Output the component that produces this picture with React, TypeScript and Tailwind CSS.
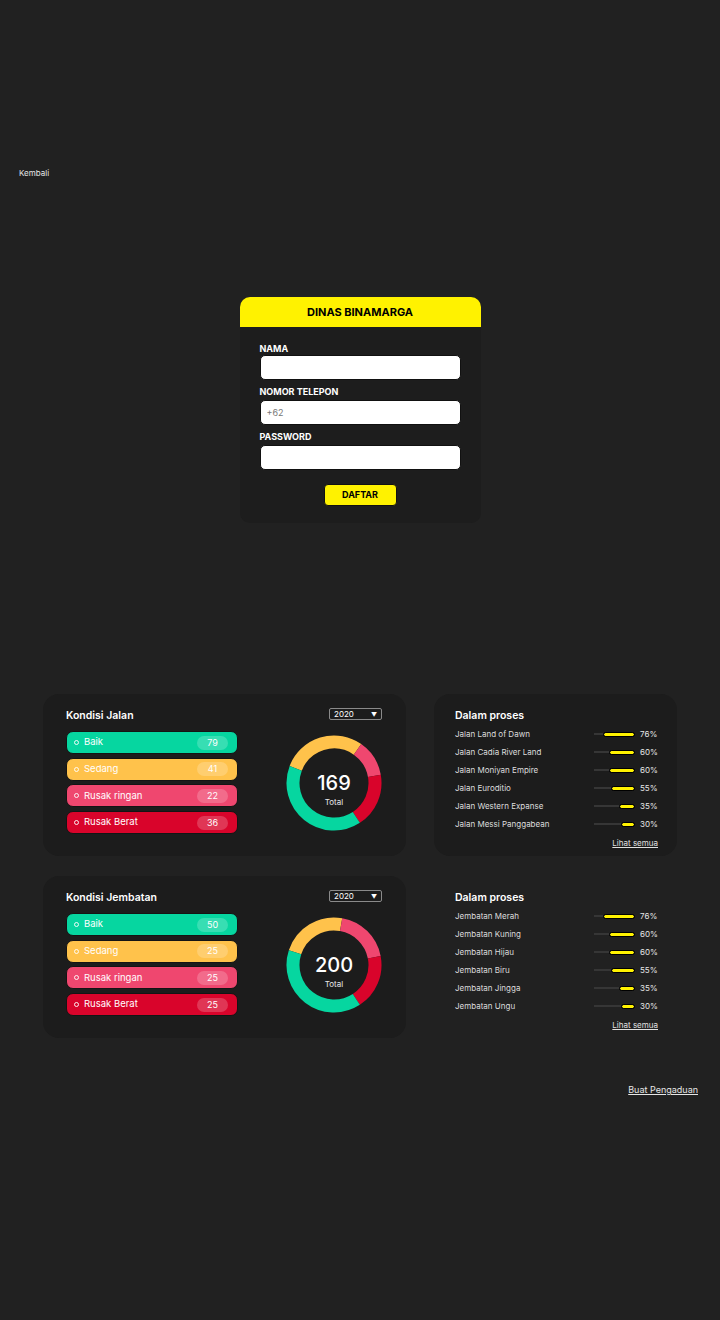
import React from "react";

interface Kondisi {
  label: string;
  value: number;
  color: string;
}

interface Segment {
  from: number;
  to: number;
  color: string;
}

interface Proses {
  name: string;
  pct: number;
}

const jalan: Kondisi[] = [
  { label: "Baik", value: 79, color: "bg-[#06d6a0]" },
  { label: "Sedang", value: 41, color: "bg-[#ffc24b]" },
  { label: "Rusak ringan", value: 22, color: "bg-[#ef476f]" },
  { label: "Rusak Berat", value: 36, color: "bg-[#d9042b]" },
];

const jembatan: Kondisi[] = [
  { label: "Baik", value: 50, color: "bg-[#06d6a0]" },
  { label: "Sedang", value: 25, color: "bg-[#ffc24b]" },
  { label: "Rusak ringan", value: 25, color: "bg-[#ef476f]" },
  { label: "Rusak Berat", value: 25, color: "bg-[#d9042b]" },
];

// angles in degrees, clockwise from 12 o'clock
const jalanDonut: Segment[] = [
  { from: 291, to: 395, color: "#ffc24b" },
  { from: 35, to: 80, color: "#ef476f" },
  { from: 80, to: 147, color: "#d9042b" },
  { from: 147, to: 291, color: "#06d6a0" },
];

const jembatanDonut: Segment[] = [
  { from: 288, to: 370, color: "#ffc24b" },
  { from: 10, to: 79, color: "#ef476f" },
  { from: 79, to: 147, color: "#d9042b" },
  { from: 147, to: 288, color: "#06d6a0" },
];

const prosesJalan: Proses[] = [
  { name: "Jalan Land of Dawn", pct: 76 },
  { name: "Jalan Cadia River Land", pct: 60 },
  { name: "Jalan Moniyan Empire", pct: 60 },
  { name: "Jalan Euroditio", pct: 55 },
  { name: "Jalan Western Expanse", pct: 35 },
  { name: "Jalan Messi Panggabean", pct: 30 },
];

const prosesJembatan: Proses[] = [
  { name: "Jembatan Merah", pct: 76 },
  { name: "Jembatan Kuning", pct: 60 },
  { name: "Jembatan Hijau", pct: 60 },
  { name: "Jembatan Biru", pct: 55 },
  { name: "Jembatan Jingga", pct: 35 },
  { name: "Jembatan Ungu", pct: 30 },
];

function point(a: number, r: number) {
  const rad = (a * Math.PI) / 180;
  return [48 + r * Math.sin(rad), 48 - r * Math.cos(rad)];
}

function arc(s: Segment) {
  const r = 41;
  const [x1, y1] = point(s.from, r);
  const [x2, y2] = point(s.to, r);
  const large = s.to - s.from > 180 ? 1 : 0;
  return `M ${x1} ${y1} A ${r} ${r} 0 ${large} 1 ${x2} ${y2}`;
}

function Donut({ segments, total }: { segments: Segment[]; total: number }) {
  return (
    <div className="relative h-[96px] w-[96px]">
      <svg width="96" height="96" viewBox="0 0 96 96">
        {segments.map((s) => (
          <path key={s.from} d={arc(s)} fill="none" stroke={s.color} strokeWidth={13} />
        ))}
      </svg>
      <div className="absolute inset-0 flex flex-col items-center pt-[37px]">
        <span className="text-[20px] font-medium leading-[22px] text-white">{total}</span>
        <span className="mt-[3px] text-[8px] leading-[10px] text-[#e8e8e8]">Total</span>
      </div>
    </div>
  );
}

function KondisiCard({
  title,
  items,
  segments,
  total,
}: {
  title: string;
  items: Kondisi[];
  segments: Segment[];
  total: number;
}) {
  return (
    <div className="flex h-[162px] w-[363px] rounded-[16px] bg-[#1c1c1c] pl-[23px] pr-[24px]">
      <div className="w-[172px] pt-[15px]">
        <h3 className="text-[10.5px] font-semibold leading-[14px] text-white">{title}</h3>
        <div className="mt-[8px] flex flex-col gap-[3.7px]">
          {items.map((it) => (
            <div
              key={it.label}
              className={`flex h-[23px] items-center rounded-[7px] border border-[#141414] pl-[7px] pr-[9px] ${it.color}`}
            >
              <span className="h-[5px] w-[5px] rounded-full border border-white/90" />
              <span className="ml-[5px] text-[9.5px] text-white">{it.label}</span>
              <span className="ml-auto flex h-[14px] w-[31px] items-center justify-center rounded-full bg-white/20 text-[9px] text-white">
                {it.value}
              </span>
            </div>
          ))}
        </div>
      </div>
      <div className="ml-auto flex flex-col items-end pt-[14px]">
        <div className="flex h-[12px] w-[53px] items-center justify-between rounded-[2px] border border-[#8a8a8a] px-[4px] text-[8px] text-white">
          <span>2020</span>
          <span className="text-[6px]">▼</span>
        </div>
        <div className="mt-[15px]">
          <Donut segments={segments} total={total} />
        </div>
      </div>
    </div>
  );
}

function ProsesCard({ items, plain }: { items: Proses[]; plain?: boolean }) {
  return (
    <div
      className={`h-[162px] w-[243px] rounded-[16px] pl-[21px] pr-[19px] pt-[15px] ${
        plain ? "" : "bg-[#1c1c1c]"
      }`}
    >
      <h3 className="text-[10.5px] font-semibold leading-[14px] text-white">Dalam proses</h3>
      <div className="mt-[2px] flex flex-col">
        {items.map((p) => (
          <div key={p.name} className="flex h-[18px] items-center">
            <span className="flex-1 text-[8px] text-[#dcdcdc]">{p.name}</span>
            <div className="flex h-[2px] w-[40px] items-center justify-end bg-[#363636]">
              <div
                className="h-[3px] rounded-full bg-[#fff200] outline outline-1 outline-black"
                style={{ width: `${(p.pct / 100) * 40}px` }}
              />
            </div>
            <span className="ml-[6px] w-[18px] text-[8px] text-[#e6e6e6]">{p.pct}%</span>
          </div>
        ))}
      </div>
      <div className="mt-[4px] text-right text-[8px] text-[#e0e0e0] underline">Lihat semua</div>
    </div>
  );
}

export default function App() {
  return (
    <div className="min-h-[1320px] bg-[#212121] font-['Inter',sans-serif] text-white">
      <div className="px-[19px] pt-[168px] text-[8px] leading-[11px] text-[#e6e6e6]">Kembali</div>

      <form className="mx-auto mt-[118px] w-[241px] rounded-[10px] bg-[#1d1d1d] pb-[17px]">
        <div className="flex h-[30px] items-center justify-center rounded-t-[10px] bg-[#fff200] text-[11px] font-bold text-black">
          DINAS BINAMARGA
        </div>
        <div className="px-[20px] pt-[16px]">
          <label className="block text-[9px] font-bold leading-[11px] text-white">NAMA</label>
          <input className="mt-[1px] block h-[25px] w-full rounded-[5px] border border-[#111] bg-white px-[6px] text-[9px] text-black outline-none" />
          <label className="mt-[6px] block text-[9px] font-bold leading-[11px] text-white">
            NOMOR TELEPON
          </label>
          <input
            placeholder="+62"
            className="mt-[3px] block h-[25px] w-full rounded-[5px] border border-[#111] bg-white px-[6px] text-[9px] text-black outline-none placeholder:text-[#777]"
          />
          <label className="mt-[6px] block text-[9px] font-bold leading-[11px] text-white">
            PASSWORD
          </label>
          <input
            type="password"
            className="mt-[3px] block h-[25px] w-full rounded-[5px] border border-[#111] bg-white px-[6px] text-[9px] text-black outline-none"
          />
          <div className="mt-[14px] flex justify-center">
            <button
              type="button"
              className="h-[22px] w-[73px] rounded-[4px] border border-[#111] bg-[#fff200] text-[9px] font-bold text-black"
            >
              DAFTAR
            </button>
          </div>
        </div>
      </form>

      <div className="mx-[43px] mt-[171px] flex flex-col gap-[20px]">
        <div className="flex gap-[28px]">
          <KondisiCard title="Kondisi Jalan" items={jalan} segments={jalanDonut} total={169} />
          <ProsesCard items={prosesJalan} />
        </div>
        <div className="flex gap-[28px]">
          <KondisiCard
            title="Kondisi Jembatan"
            items={jembatan}
            segments={jembatanDonut}
            total={200}
          />
          <ProsesCard items={prosesJembatan} plain />
        </div>
      </div>

      <div className="mt-[45px] pr-[22px] text-right text-[9px] text-[#e6e6e6] underline">
        Buat Pengaduan
      </div>
    </div>
  );
}
